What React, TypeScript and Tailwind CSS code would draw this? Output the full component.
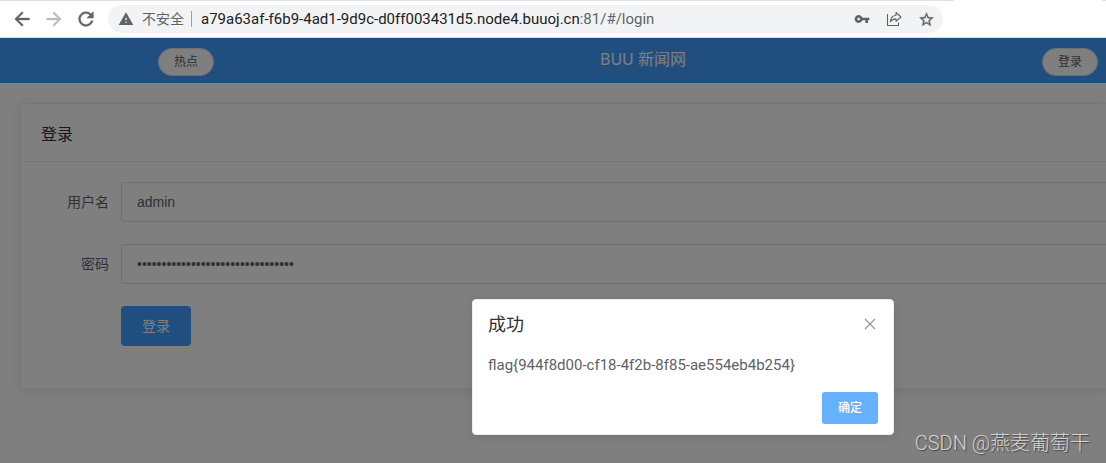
import React, { useState } from 'react';
import { MdVpnKey, MdWarning } from 'react-icons/md';

const host = 'a79a63af-f6b9-4ad1-9d9c-d0ff003431d5.node4.buuoj.cn';
const path = ':81/#/login';

// Slightly heavier versions of the material toolbar icons
const iconPaths = {
  back: 'M20 11H7.830l5.590-5.590L12 4l-8 8 8 8 1.410-1.410L7.830 13H20v-2z',
  forward: 'M12 4l-1.410 1.410L16.170 11H4v2h12.170l-5.580 5.590L12 20l8-8z',
  reload:
    'M17.650 6.350A7.958 7.958 0 0012 4c-4.420 0-7.990 3.580-7.990 8s3.570 8 7.990 8c3.730 0 6.840-2.550 7.730-6h-2.080A5.990 5.990 0 0112 18c-3.310 0-6-2.690-6-6s2.690-6 6-6c1.660 0 3.140.690 4.220 1.780L13 11h7V4l-2.350 2.350z',
  star: 'M22 9.240l-7.190-.620L12 2 9.190 8.630 2 9.240l5.460 4.730L5.820 21 12 17.270 18.180 21l-1.630-7.030L22 9.240zM12 15.400l-3.760 2.270 1-4.280-3.320-2.880 4.380-.380L12 6.100l1.710 4.040 4.380.380-3.320 2.880 1 4.280L12 15.400z',
};

function Icon({ name, size }: { name: keyof typeof iconPaths; size: number }) {
  return (
    <svg
      width={size}
      height={size}
      viewBox="0 0 24 24"
      fill="currentColor"
      stroke="currentColor"
      strokeWidth="0.5"
    >
      <path d={iconPaths[name]} />
    </svg>
  );
}

function ShareIcon() {
  return (
    <svg width="16" height="16" viewBox="0 0 16 16" fill="none" stroke="#5f6368" strokeWidth="1.1">
      <path d="M1.500 3v11.500h11v-3" />
      <path d="M10 1.500l5 4.500-5 4.400V7.900c-2.600 0-4.300.8-5.700 2.800.4-3.700 2.300-6.100 5.700-6.500z" strokeLinejoin="round" />
    </svg>
  );
}

function Toolbar() {
  return (
    <div className="h-[38px] border-b border-[#dadce0] bg-white">
      <div className="flex justify-between">
        <div className="mr-[148px] h-px flex-1 rounded-r-full bg-[#dee1e6]" />
        <div className="h-px w-1 bg-[#dee1e6]" />
      </div>
      <div className="flex h-9 items-center">
        <div className="flex w-[108px] shrink-0 items-center gap-[10px] pl-[11px] text-[#5f6368]">
          <button type="button" aria-label="Back">
            <Icon name="back" size={22} />
          </button>
          <button type="button" aria-label="Forward" className="text-[#babcbe]">
            <Icon name="forward" size={22} />
          </button>
          <button type="button" aria-label="Reload">
            <Icon name="reload" size={22} />
          </button>
        </div>
        <div className="mr-[163px] flex h-7 min-w-0 flex-1 items-center rounded-full bg-[#f1f3f4] pr-2 pl-[10px] text-[#5f6368]">
          <button type="button" className="flex shrink-0 items-center gap-2 text-sm leading-5">
            <MdWarning size={16} />
            不安全
          </button>
          <span className="ml-[7px] h-4 w-px shrink-0 bg-[#9aa0a6]" />
          <div
            role="textbox"
            aria-label="Address"
            tabIndex={0}
            className="ml-[9px] flex-1 truncate font-[Roboto,sans-serif] text-[15px] leading-5"
          >
            <span className="text-[#202124]">{host}</span>
            {path}
          </div>
          <div className="flex shrink-0 items-center gap-4">
            <button type="button" aria-label="Passwords">
              <MdVpnKey size={16} />
            </button>
            <button type="button" aria-label="Share">
              <ShareIcon />
            </button>
            <button type="button" aria-label="Bookmark">
              <Icon name="star" size={17} />
            </button>
          </div>
        </div>
      </div>
    </div>
  );
}

function Header() {
  const pill =
    'h-7 w-14 rounded-full border border-[#dcdfe6] bg-white text-xs text-[#606266]';
  return (
    <header className="grid h-[45px] grid-cols-[372px_1fr_192px] bg-[#409eff] pt-[10px]">
      <div className="text-center">
        <button type="button" className={pill}>热点</button>
      </div>
      <h1 className="text-center text-base leading-[22px] text-white">BUU 新闻网</h1>
      <div className="pr-2 text-right">
        <button type="button" className={pill}>登录</button>
      </div>
    </header>
  );
}

interface FieldProps {
  id: string;
  label: string;
  type: string;
  value: string;
  onChange: (value: string) => void;
}

function Field({ id, label, type, value, onChange }: FieldProps) {
  return (
    <div className="mb-[22px] flex">
      <label htmlFor={id} className="w-20 shrink-0 pr-3 text-right text-sm leading-10 text-[#606266]">
        {label}
      </label>
      <input
        id={id}
        type={type}
        value={value}
        onChange={(e) => onChange(e.target.value)}
        className="h-10 min-w-0 flex-1 rounded-l border border-r-0 border-[#dcdfe6] bg-white px-[15px] font-['Liberation_Sans',Arial,sans-serif] text-sm text-[#606266] outline-none"
      />
    </div>
  );
}

function LoginCard() {
  const [username, setUsername] = useState('admin');
  const [password, setPassword] = useState('*'.repeat(32));

  return (
    <section className="mt-5 ml-5 rounded-l border border-r-0 border-[#ebeef5] bg-white shadow-[0_2px_12px_rgba(0,0,0,0.1)]">
      <h2 className="border-b border-[#ebeef5] px-5 pt-5 pb-4 text-base leading-[21px] text-[#303133]">
        登录
      </h2>
      <form className="py-5 pl-5" onSubmit={(e) => e.preventDefault()}>
        <Field id="username" label="用户名" type="text" value={username} onChange={setUsername} />
        <Field id="password" label="密码" type="password" value={password} onChange={setPassword} />
        <button
          type="submit"
          className="mb-[22px] ml-20 block h-10 w-[70px] rounded bg-[#409eff] text-sm text-white"
        >
          登录
        </button>
      </form>
    </section>
  );
}

function MessageBox({ onClose }: { onClose: () => void }) {
  return (
    <div className="absolute inset-0 flex items-end justify-center bg-black/50 pb-7 pl-[260px]">
      <div
        role="dialog"
        aria-labelledby="message-title"
        className="w-[422px] rounded border border-[#ebeef5] bg-white px-[15px] pb-[10px] shadow-[0_2px_12px_rgba(0,0,0,0.1)]"
      >
        <div className="flex items-center justify-between pt-3">
          <h2 id="message-title" className="text-lg leading-6 text-[#303133]">成功</h2>
          <button type="button" aria-label="Close" onClick={onClose}>
            <svg width="16" height="16" viewBox="0 0 16 16" stroke="#909399" strokeWidth="1.1">
              <path d="M3 3l10 10M13 3L3 13" />
            </svg>
          </button>
        </div>
        <p className="pt-[17px] pb-[15px] font-[Roboto,sans-serif] text-[15px] leading-6 text-[#606266]">
          flag{'{'}944f8d00-cf18-4f2b-8f85-ae554eb4b254{'}'}
        </p>
        <div className="flex justify-end">
          <button
            type="button"
            onClick={onClose}
            className="h-8 w-14 rounded-[3px] bg-[#66b1ff] text-xs font-medium text-white"
          >
            确定
          </button>
        </div>
      </div>
    </div>
  );
}

export default function App() {
  const [open, setOpen] = useState(true);

  return (
    <div className="flex min-h-screen flex-col overflow-hidden bg-white font-['Noto_Sans','Noto_Sans_CJK_SC',sans-serif]">
      <Toolbar />
      <main className="relative flex-1 overflow-hidden">
        <Header />
        <LoginCard />
        {open && <MessageBox onClose={() => setOpen(false)} />}
        <div className="absolute right-4 bottom-2 font-[Roboto,'Noto_Sans_CJK_SC',sans-serif] text-xl leading-6 font-light text-[#d4d4d4] [text-shadow:1px_1px_1px_#444]">
          CSDN @燕麦葡萄干
        </div>
      </main>
    </div>
  );
}
